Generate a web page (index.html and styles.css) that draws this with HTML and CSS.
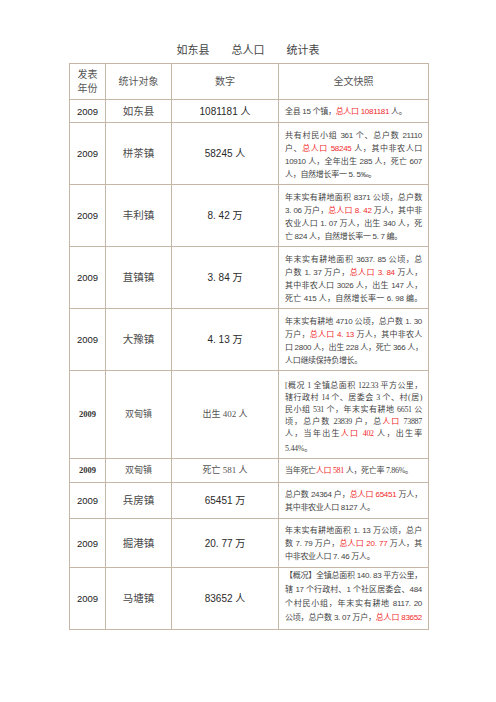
FILE: index.html
```html
<!DOCTYPE html>
<html lang="zh-CN">
<head>
<meta charset="utf-8">
<title>如东县 总人口 统计表</title>
<link rel="stylesheet" href="styles.css">
</head>
<body>
<div class="page">
  <h1 class="title">如东县　　总人口　　统计表</h1>
  <table class="tbl">
    <colgroup>
      <col class="c1"><col class="c2"><col class="c3"><col class="c4">
    </colgroup>
    <tr class="h-head">
      <td class="head2">发表<br>年份</td>
      <td class="head">统计对象</td>
      <td class="head">数字</td>
      <td class="head">全文快照</td>
    </tr>
    <tr class="h23">
      <td class="yr">2009</td>
      <td class="nm">如东县</td>
      <td class="num">1081181 人</td>
      <td class="desc mid"><div class="ln">全县 15 个镇，<span class="hl">总人口 1081181</span> 人。</div></td>
    </tr>
    <tr class="h62">
      <td class="yr">2009</td>
      <td class="nm">栟茶镇</td>
      <td class="num">58245 人</td>
      <td class="desc">
        <div class="ln j">共有村民小组 361 个、总户数 21110</div>
        <div class="ln j">户、<span class="hl">总人口 58245</span> 人，其中非农人口</div>
        <div class="ln j">10910 人，全年出生 285 人，死亡 607</div>
        <div class="ln">人，自然增长率一 5. 5‰。</div>
      </td>
    </tr>
    <tr class="h62">
      <td class="yr">2009</td>
      <td class="nm">丰利镇</td>
      <td class="num">8. 42 万</td>
      <td class="desc">
        <div class="ln j">年末实有耕地面积 8371 公顷，总户数</div>
        <div class="ln j">3. 06 万户，<span class="hl">总人口 8. 42</span> 万人，其中非</div>
        <div class="ln j">农业人口 1. 07 万人，出生 340 人，死</div>
        <div class="ln">亡 824 人，自然增长率一 5. 7 编。</div>
      </td>
    </tr>
    <tr class="h62">
      <td class="yr">2009</td>
      <td class="nm">苴镇镇</td>
      <td class="num">3. 84 万</td>
      <td class="desc">
        <div class="ln j">年末实有耕地面积 3637. 85 公顷，总</div>
        <div class="ln j">户数 1. 37 万户，<span class="hl">总人口 3. 84</span> 万人，</div>
        <div class="ln j">其中非农人口 3026 人，出生 147 人，</div>
        <div class="ln j">死亡 415 人，自然增长率一 6. 98 编。</div>
      </td>
    </tr>
    <tr class="h62">
      <td class="yr">2009</td>
      <td class="nm">大豫镇</td>
      <td class="num">4. 13 万</td>
      <td class="desc">
        <div class="ln j">年末实有耕地 4710 公顷，总户数 1. 30</div>
        <div class="ln j">万户，<span class="hl">总人口 4. 13</span> 万人，其中非农人</div>
        <div class="ln j">口 2800 人，出生 228 人，死亡 366 人，</div>
        <div class="ln">人口继续保持负增长。</div>
      </td>
    </tr>
    <tr class="h88">
      <td class="yr serif">2009</td>
      <td class="nm serif">双甸镇</td>
      <td class="num serif">出生 402 人</td>
      <td class="desc serifd">
        <div class="ln j">[概况 1 全镇总面积 122.33 平方公里，</div>
        <div class="ln j">辖行政村 14 个、居委会 3 个、村(居)</div>
        <div class="ln j">民小组 531 个，年末实有耕地 6651 公</div>
        <div class="ln j">顷，总户数 23839 户，总<span class="hl">人口</span> 73887</div>
        <div class="ln j">人，当年出生<span class="hl">人口 402</span> 人，出生率</div>
        <div class="ln last">5.44%。</div>
      </td>
    </tr>
    <tr class="h24">
      <td class="yr serif">2009</td>
      <td class="nm serif">双甸镇</td>
      <td class="num serif">死亡 581 人</td>
      <td class="desc mid serifd"><div class="ln">当年死亡<span class="hl">人口 581</span> 人，死亡率 7.86%。</div></td>
    </tr>
    <tr class="h36">
      <td class="yr">2009</td>
      <td class="nm">兵房镇</td>
      <td class="num">65451 万</td>
      <td class="desc p5">
        <div class="ln j">总户数 24364 户，<span class="hl">总人口 65451</span> 万人，</div>
        <div class="ln">其中非农业人口 8127 人。</div>
      </td>
    </tr>
    <tr class="h49">
      <td class="yr">2009</td>
      <td class="nm">掘港镇</td>
      <td class="num">20. 77 万</td>
      <td class="desc p5">
        <div class="ln j">年末实有耕地面积 1. 13 万公顷，总户</div>
        <div class="ln j">数 7. 79 万户，<span class="hl">总人口 20. 77</span> 万人，其</div>
        <div class="ln">中非农业人口 7. 46 万人。</div>
      </td>
    </tr>
    <tr class="h62">
      <td class="yr">2009</td>
      <td class="nm">马塘镇</td>
      <td class="num">83652 人</td>
      <td class="desc p1">
        <div class="ln j">【概况】全镇总面积 140. 83 平方公里，</div>
        <div class="ln j">辖 17 个行政村、1 个社区居委会、484</div>
        <div class="ln j">个村民小组，年末实有耕地 8117. 20</div>
        <div class="ln j">公顷，总户数 3. 07 万户，<span class="hl">总人口 83652</span></div>
      </td>
    </tr>
  </table>
</div>
</body>
</html>
```

FILE: styles.css
```css
html, body {
  margin: 0;
  padding: 0;
  background: #ffffff;
}

body {
  width: 496px;
  height: 702px;
  overflow: hidden;
  font-family: "Liberation Sans", "Noto Sans CJK SC", sans-serif;
  color: #333333;
}

.page {
  padding-top: 43px;
}

.title {
  margin: 0 0 6px 0;
  height: 14px;
  font-size: 11px;
  line-height: 14px;
  font-weight: normal;
  text-align: center;
  color: #444444;
}

.tbl {
  border-collapse: collapse;
  table-layout: fixed;
  width: 359px;
  margin-left: 69px;
}

.c1 { width: 36px; }
.c2 { width: 66px; }
.c3 { width: 107px; }
.c4 { width: 150px; }

.tbl td {
  border: 1px solid #c6b6a6;
  padding: 0;
  text-align: center;
  vertical-align: middle;
  font-size: 10px;
  line-height: 13px;
  color: #333333;
  overflow: hidden;
}

.h-head { height: 36px; }
.h23 { height: 23px; }
.h24 { height: 24px; }
.h36 { height: 36px; }
.h49 { height: 49px; }
.h62 { height: 62px; }
.h88 { height: 88px; }

.tbl td.head,
.tbl td.head2 {
  font-size: 10px;
  color: #555555;
}

.tbl td.head2 {
  line-height: 14px;
}

.tbl td.yr {
  font-size: 9.5px;
  color: #222222;
}

.tbl td.nm {
  font-size: 10.5px;
  color: #4a4a4a;
}

.tbl td.num {
  font-size: 10px;
  color: #2a2a2a;
}

.tbl td.serif {
  font-family: "Liberation Serif", "Noto Sans CJK SC", serif;
  font-size: 9px;
  color: #555555;
}

.tbl td.yr.serif {
  font-weight: bold;
  font-size: 8.5px;
  color: #333333;
}

.tbl td.desc {
  text-align: left;
  vertical-align: top;
  padding: 6px 6px 0 6px;
  font-size: 8px;
  line-height: 13px;
  letter-spacing: -0.3px;
  color: #444444;
}

.tbl td.desc.mid {
  vertical-align: middle;
  padding-top: 0;
}

.tbl td.desc.p5 {
  padding-top: 5px;
}

.tbl td.desc.p1 {
  padding-top: 1px;
  line-height: 14px;
}

.tbl td.desc.serifd {
  font-family: "Liberation Serif", "Noto Sans CJK SC", serif;
  line-height: 12px;
  padding-top: 9px;
}

.tbl td.desc.serifd.mid {
  padding-top: 0;
}

.ln {
  white-space: nowrap;
}

.ln.j {
  text-align: justify;
  text-align-last: justify;
}

.ln.last {
  margin-top: 3px;
}

.hl {
  color: #f02a2a;
}
```
